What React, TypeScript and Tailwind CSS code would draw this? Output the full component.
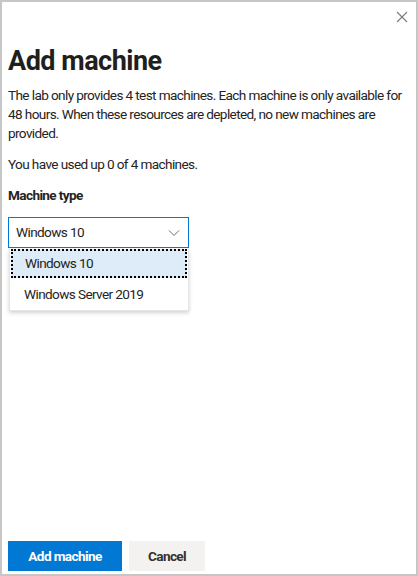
import React from "react";

export default function App() {
  return (
    <div
      className="w-[418px] h-[576px] border-2 border-[#c6c6c6] bg-white flex flex-col text-[#252423]"
      style={{ fontFamily: 'Roboto, "Noto Sans", sans-serif' }}
    >
      <div className="flex justify-end pt-[8px] pr-[8px]">
        <svg width="12" height="12" viewBox="0 0 12 12" className="mt-[1px]">
          <path d="M1 1 L11 11 M11 1 L1 11" stroke="#7a7a7a" strokeWidth="1.1" fill="none" />
        </svg>
      </div>
      <div className="px-[6px] flex-1 flex flex-col text-[13.6px] tracking-[-0.62px]">
        <h1 className="text-[27px] font-bold leading-[34px] mt-[21px] text-[#201f1e] tracking-[-0.5px]">Add machine</h1>
        <p className="leading-[19px] mt-[8px]">
          The lab only provides 4 test machines. Each machine is only available for 48 hours. When these resources are depleted, no new machines are provided.
        </p>
        <p className="leading-[19px] mt-[12px]">You have used up 0 of 4 machines.</p>
        <div className="leading-[19px] font-bold mt-[12px]">Machine type</div>
        <div className="mt-[12px] w-[181px] relative">
          <div className="h-[31px] border border-[#0078d4] flex items-center justify-between pl-[7px] pr-[8px]">
            <span>Windows 10</span>
            <svg width="12" height="8" viewBox="0 0 12 8">
              <path d="M1 1.5 L6 6.5 L11 1.5" stroke="#6b6b6b" strokeWidth="1" fill="none" />
            </svg>
          </div>
          <div className="ml-[1px] bg-white shadow-[0_2px_4px_rgba(0,0,0,0.18)] border-x border-b border-[#e6e6e6]">
            <div className="h-[29px] mx-[1px] mt-[1px] bg-[#deecf9] border-2 border-dotted border-black flex items-center pl-[12px]">
              Windows 10
            </div>
            <div className="h-[32px] flex items-center pl-[14px]">Windows Server 2019</div>
          </div>
        </div>
        <div className="flex-1" />
        <div className="flex gap-[7px] mb-[3px]">
          <button className="w-[114px] h-[30px] bg-[#0078d4] text-white font-bold">Add machine</button>
          <button className="w-[76px] h-[30px] bg-[#f3f2f1] text-[#323130] font-bold">Cancel</button>
        </div>
      </div>
    </div>
  );
}
